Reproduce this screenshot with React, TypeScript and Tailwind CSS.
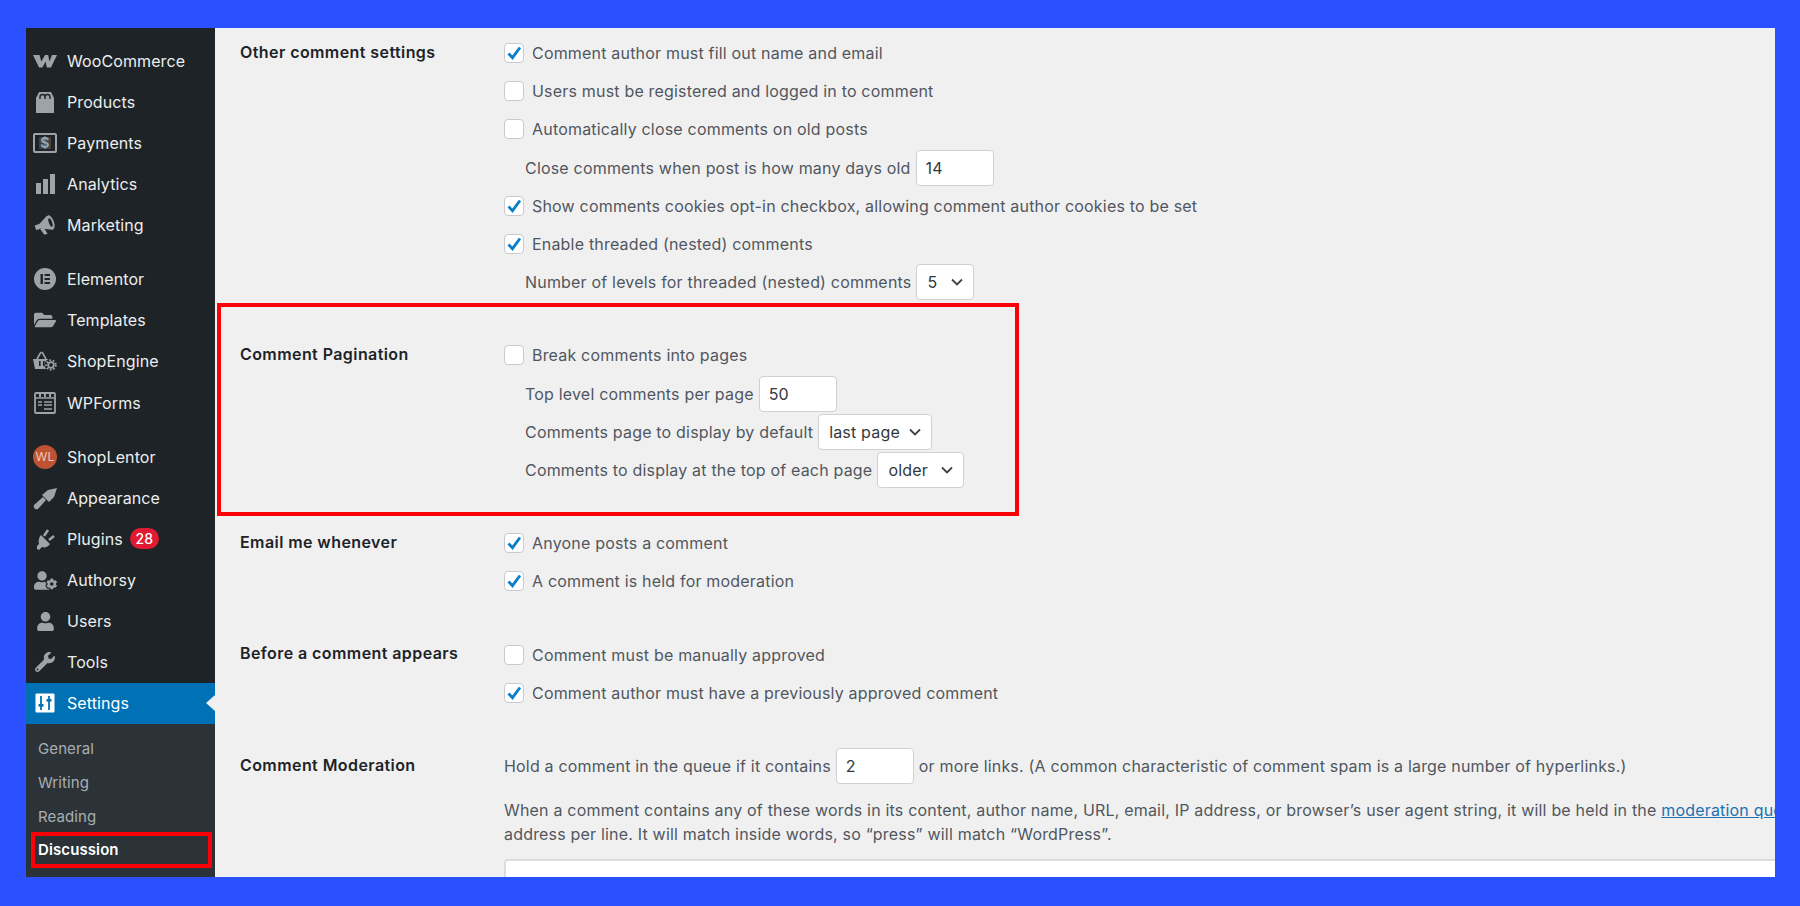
import type { ReactNode } from "react";
import { FaFolderOpen, FaUser, FaUserCog, FaWrench } from "react-icons/fa";

const font = "font-['Inter','Liberation_Sans',sans-serif]";

const WooIcon = () => (
  <svg viewBox="0 0 24 24" className="h-6 w-6" fill="currentColor">
    <path d="M0 6h6.5l1.8 6.5L12 6h3.2l1.2 6.5L19 6h5l-6 12.5h-4.2l-1.2-6-3.2 6H6z" />
  </svg>
);

const ProductsIcon = () => (
  <svg viewBox="0 0 24 24" className="h-6 w-6" fill="currentColor">
    <path d="M3 23V8l3-6h12l3 6v15z" />
    <path d="M7 9V7a2.5 2.5 0 0 1 5 0v2M12 9V7a2.5 2.5 0 0 1 5 0v2" fill="none" stroke="#1d2327" strokeWidth="1.4" />
  </svg>
);

const PaymentsIcon = () => (
  <svg viewBox="0 0 24 24" className="h-6 w-6" fill="none" stroke="currentColor">
    <rect x="1" y="3" width="22" height="18" rx="1" strokeWidth="2" />
    <rect x="6" y="6" width="12" height="12" fill="currentColor" stroke="none" opacity="0.25" />
    <text x="12" y="17" textAnchor="middle" fontSize="14" fontWeight="700" fill="currentColor" stroke="none">$</text>
  </svg>
);

const AnalyticsIcon = () => (
  <svg viewBox="0 0 24 24" className="h-6 w-6" fill="currentColor">
    <rect x="3" y="11" width="5" height="11" />
    <rect x="10" y="7" width="5" height="15" />
    <rect x="17" y="2" width="5" height="20" />
  </svg>
);

const MarketingIcon = () => (
  <svg viewBox="0 0 24 24" className="h-6 w-6" fill="currentColor">
    <g transform="rotate(-20 12 12)">
      <path d="M2 9h5l10-5v15l-10-5H2z" />
      <path d="M6 14h4l1.5 7H8z" />
      <ellipse cx="18" cy="11.5" rx="3.5" ry="7.5" />
      <ellipse cx="18" cy="11.5" rx="1.6" ry="4.5" fill="#1d2327" />
    </g>
  </svg>
);

const ElementorIcon = () => (
  <svg viewBox="0 0 24 24" className="h-6 w-6">
    <circle cx="12" cy="12" r="11" fill="currentColor" />
    <rect x="7.5" y="7" width="2.4" height="10" fill="#1d2327" />
    <rect x="11.5" y="7" width="5.5" height="2" fill="#1d2327" />
    <rect x="11.5" y="11" width="5.5" height="2" fill="#1d2327" />
    <rect x="11.5" y="15" width="5.5" height="2" fill="#1d2327" />
  </svg>
);

const ShopEngineIcon = () => (
  <svg viewBox="0 0 24 24" className="h-6 w-6" fill="currentColor">
    <path d="M0 10h17l-2 10H2z" />
    <path d="M4 10l4-7M13 10L9 3" fill="none" stroke="currentColor" strokeWidth="1.6" />
    <rect x="6" y="12" width="1.6" height="5" fill="#1d2327" />
    <rect x="10" y="12" width="1.6" height="5" fill="#1d2327" />
    <circle cx="18" cy="16" r="6.5" fill="#1d2327" />
    <circle cx="18" cy="16" r="2.8" fill="none" stroke="currentColor" strokeWidth="1.8" />
    <circle cx="18" cy="16" r="4.8" fill="none" stroke="currentColor" strokeWidth="1.8" strokeDasharray="1.7 1.7" />
  </svg>
);

const WpFormsIcon = () => (
  <svg viewBox="0 0 24 24" className="h-6 w-6" fill="none" stroke="currentColor">
    <rect x="2" y="2" width="20" height="20" rx="1" strokeWidth="1.8" />
    <path d="M2 7h20" strokeWidth="1.5" />
    <path d="M7 2v4M12 2v4M17 2v4" strokeWidth="2" />
    <path d="M5 11h4M11 11h8M5 14h4M11 14h8M11 18h8" strokeWidth="1.6" />
  </svg>
);

const BrushIcon = () => (
  <svg viewBox="0 0 24 24" className="h-6 w-6" fill="currentColor">
    <path d="M1 19l9-8 3 3-8 9a3 3 0 0 1-4-4z" />
    <path d="M9 9l6-5 9-2-3 9-5 5z" />
  </svg>
);

const PlugIcon = () => (
  <svg viewBox="0 0 24 24" className="h-6 w-6" fill="currentColor">
    <path d="M8 8l9 9c-2 3-5 4-8 3l-3 3-2-1v-3l2-2C5 14 6 10 8 8z" />
    <path d="M11 9l4-6M16 13l5-4" fill="none" stroke="currentColor" strokeWidth="2.6" />
  </svg>
);

const SettingsIcon = () => (
  <svg viewBox="0 0 24 24" className="h-6 w-6">
    <rect x="2.5" y="2.5" width="19" height="19" rx="1" fill="#fff" />
    <path d="M8 5v14M16 5v14" stroke="#0071b5" strokeWidth="1.8" />
    <rect x="5.5" y="13" width="5" height="2.6" fill="#0071b5" />
    <rect x="13.5" y="8" width="5" height="2.6" fill="#0071b5" />
  </svg>
);

const MENU: { label: string; icon: ReactNode; badge?: string; gap?: boolean }[] = [
  { label: "WooCommerce", icon: <WooIcon /> },
  { label: "Products", icon: <ProductsIcon /> },
  { label: "Payments", icon: <PaymentsIcon /> },
  { label: "Analytics", icon: <AnalyticsIcon /> },
  { label: "Marketing", icon: <MarketingIcon /> },
  { label: "Elementor", icon: <ElementorIcon />, gap: true },
  { label: "Templates", icon: <FaFolderOpen size={22} /> },
  { label: "ShopEngine", icon: <ShopEngineIcon /> },
  { label: "WPForms", icon: <WpFormsIcon /> },
  {
    label: "ShopLentor",
    gap: true,
    icon: (
      <span className="flex h-6 w-6 items-center justify-center rounded-full bg-[#bd5332] text-[12px] text-[#f0c8b8]">
        WL
      </span>
    ),
  },
  { label: "Appearance", icon: <BrushIcon /> },
  { label: "Plugins", icon: <PlugIcon />, badge: "28" },
  { label: "Authorsy", icon: <FaUserCog size={23} /> },
  { label: "Users", icon: <FaUser size={19} /> },
  { label: "Tools", icon: <FaWrench size={20} /> },
];

function Sidebar() {
  return (
    <aside className="w-[189px] shrink-0 overflow-hidden bg-[#1d2327] pt-[12px] text-[16px] tracking-[0.1px] text-[#eceeef]">
      {MENU.map((item) => (
        <div
          key={item.label}
          className={`flex h-[41.13px] items-center pl-[7px] ${item.gap ? "mt-[13px]" : ""}`}
        >
          <span className="flex w-6 justify-center text-[#9ea3a8]">{item.icon}</span>
          <span className="ml-[10px]">{item.label}</span>
          {item.badge && (
            <span className="ml-[7px] flex h-[21px] w-[29px] items-center justify-center rounded-full bg-[#e01a33] text-[14px] font-medium text-white">
              {item.badge}
            </span>
          )}
        </div>
      ))}
      <div className="relative flex h-[41px] items-center bg-[#0071b5] pl-[7px] text-white">
        <span className="flex w-6 justify-center">
          <SettingsIcon />
        </span>
        <span className="ml-[10px]">Settings</span>
        <span className="absolute right-0 top-[12px] border-y-[8px] border-r-[9px] border-y-transparent border-r-[#f0f0f1]" />
      </div>
      <div className="bg-[#2c3338] pl-[12px] pt-[8px] text-[15px] text-[#a9aeb2]">
        <div className="flex h-[34px] items-center">General</div>
        <div className="flex h-[34px] items-center">Writing</div>
        <div className="flex h-[34px] items-center">Reading</div>
        <div className="flex h-[33px] items-center font-semibold text-white">Discussion</div>
        <div className="flex h-[34px] items-center">Media</div>
      </div>
    </aside>
  );
}

function Checkbox({ checked }: { checked?: boolean }) {
  return (
    <span className="mr-[8px] flex h-5 w-5 shrink-0 items-center justify-center rounded-[4px] border border-[#c9cacb] bg-white">
      {checked && (
        <svg viewBox="0 0 20 20" className="h-5 w-5 shrink-0" fill="none" stroke="#0a7fc9" strokeWidth="2.8">
          <path d="M4.5 10.5l4 4.2L16 4.5" />
        </svg>
      )}
    </span>
  );
}

function Row({ checked, box, children }: { checked?: boolean; box?: boolean; children: ReactNode }) {
  return (
    <div className={`flex h-[38.2px] items-center whitespace-nowrap ${box ? "" : "pl-[21px]"}`}>
      {box && <Checkbox checked={checked} />}
      {children}
    </div>
  );
}

function NumberInput({ value }: { value: string }) {
  return (
    <input
      readOnly
      value={value}
      className="ml-[5px] h-9 w-[78px] rounded-[4px] border border-[#cfd0d1] bg-white pl-[9px] text-[#33383d] outline-none"
    />
  );
}

function SelectBox({ value, width }: { value: string; width: string }) {
  return (
    <span className={`relative ml-[5px] inline-flex h-9 items-center rounded-[4px] border border-[#cfd0d1] bg-white pl-[10px] text-[#33383d] ${width}`}>
      {value}
      <svg viewBox="0 0 12 8" className="absolute right-[10px] top-[13px] h-2 w-3" fill="none" stroke="#3c434a" strokeWidth="1.8">
        <path d="M1 1.5l5 5 5-5" />
      </svg>
    </span>
  );
}

function Section({ title, children }: { title: string; children: ReactNode }) {
  return (
    <section className="flex">
      <h2 className="h-[38.2px] w-[264px] shrink-0 pt-[6px] font-semibold tracking-[0.42px] text-[#1d2327]">{title}</h2>
      <div className="min-w-0 flex-1">{children}</div>
    </section>
  );
}

function Settings() {
  return (
    <main className="relative min-w-0 flex-1 overflow-hidden bg-[#f0f0f1] pl-[25px] pt-[6px] text-[16px] tracking-[0.19px] text-[#50575e]">
      <div className="flex flex-col gap-[35px]">
        <Section title="Other comment settings">
          <Row box checked>Comment author must fill out name and email</Row>
          <Row box>Users must be registered and logged in to comment</Row>
          <Row box>Automatically close comments on old posts</Row>
          <Row>
            Close comments when post is how many days old
            <NumberInput value="14" />
          </Row>
          <Row box checked>Show comments cookies opt-in checkbox, allowing comment author cookies to be set</Row>
          <Row box checked>Enable threaded (nested) comments</Row>
          <Row>
            Number of levels for threaded (nested) comments
            <SelectBox value="5" width="w-[58px]" />
          </Row>
        </Section>

        <Section title="Comment Pagination">
          <Row box>Break comments into pages</Row>
          <Row>
            Top level comments per page
            <NumberInput value="50" />
          </Row>
          <Row>
            Comments page to display by default
            <SelectBox value="last page" width="w-[114px]" />
          </Row>
          <Row>
            Comments to display at the top of each page
            <SelectBox value="older" width="w-[87px]" />
          </Row>
        </Section>

        <Section title="Email me whenever">
          <Row box checked>Anyone posts a comment</Row>
          <Row box checked>A comment is held for moderation</Row>
        </Section>

        <Section title="Before a comment appears">
          <Row box>Comment must be manually approved</Row>
          <Row box checked>Comment author must have a previously approved comment</Row>
        </Section>

        <Section title="Comment Moderation">
          <div className="flex h-[38.2px] items-center whitespace-nowrap">
            Hold a comment in the queue if it contains
            <NumberInput value="2" />
            <span className="ml-[5px]">
              or more links. (A common characteristic of comment spam is a large number of hyperlinks.)
            </span>
          </div>
          <p className="mt-[13px] whitespace-nowrap leading-[24px]">
            When a comment contains any of these words in its content, author name, URL, email, IP address, or
            browser’s user agent string, it will be held in the{" "}
            <a className="text-[#2271b1] underline">moderation queue</a>. One word or IP
            <br />
            address per line. It will match inside words, so “press” will match “WordPress”.
          </p>
          <div className="mt-[13px] h-[120px] w-[1400px] rounded-[4px] border-2 border-[#dcdcdd] bg-white" />
        </Section>
      </div>
      <div className="pointer-events-none absolute left-[2px] top-[275px] h-[213px] w-[802px] border-[4px] border-[#fb0007]" />
    </main>
  );
}

export default function App() {
  return (
    <div className={`h-[906px] w-[1800px] overflow-hidden bg-[#2a50ff] pb-[29px] pl-[26px] pr-[25px] pt-[28px] ${font}`}>
      <div className="relative flex h-full overflow-hidden">
        <Sidebar />
        <Settings />
        <div className="pointer-events-none absolute left-[5px] top-[804px] h-9 w-[181px] border-[4px] border-[#fb0007]" />
      </div>
    </div>
  );
}
